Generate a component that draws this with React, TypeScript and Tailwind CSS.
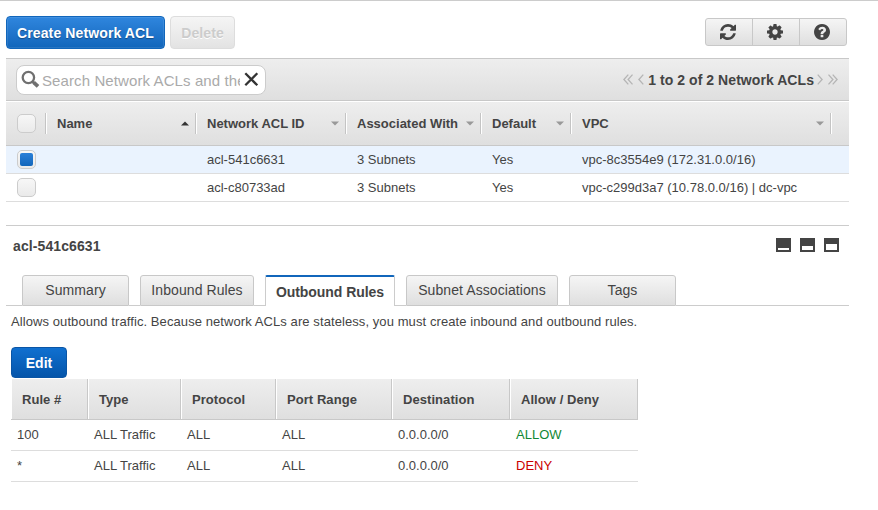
import React from "react";

const GREY = "bg-linear-to-b from-[#eeeeee] to-[#dfdfdf]";
const BTN = "bg-linear-to-b from-[#f5f5f5] to-[#dfdfdf]";

const REFRESH =
  "M1511 928q0 5-1 7-64 268-268 434.5t-478 166.5q-146 0-282.5-55t-243.5-157l-129 129q-19 19-45 19t-45-19-19-45v-448q0-26 19-45t45-19h448q26 0 45 19t19 45-19 45l-137 137q71 66 161 102t187 36q134 0 250-65t186-179q11-17 53-117 8-23 30-23h192q13 0 22.5 9.5t9.5 22.5zm25-800v448q0 26-19 45t-45 19h-448q-26 0-45-19t-19-45 19-45l138-138q-148-137-349-137-134 0-250 65t-186 179q-11 17-53 117-8 23-30 23h-199q-13 0-22.5-9.5t-9.5-22.5v-7q65-268 270-434.5t480-166.5q146 0 284 55.5t245 156.5l130-129q19-19 45-19t45 19 19 45z";
const COG =
  "M1024 768q0-106-75-181t-181-75-181 75-75 181 75 181 181 75 181-75 75-181zm512-109v222q0 12-8 23t-20 13l-185 28q-19 54-39 91 35 50 107 138 10 12 10 25t-9 23q-27 37-99 108t-94 71q-12 0-26-9l-138-108q-44 23-91 38-16 136-29 186-7 28-36 28h-222q-14 0-24.5-8.5t-11.5-21.5l-28-184q-49-16-90-37l-141 107q-10 9-25 9-14 0-25-11-126-114-165-168-7-10-7-23 0-12 8-23 15-21 51-66.5t54-70.5q-27-50-41-99l-183-27q-13-2-21-12.5t-8-23.5v-222q0-12 8-23t19-13l186-28q14-46 39-92-40-57-107-138-10-12-10-24 0-10 9-23 26-36 98.5-107.5t94.5-71.5q13 0 26 10l138 107q44-23 91-38 16-136 29-186 7-28 36-28h222q14 0 24.5 8.5t11.5 21.5l28 184q49 16 90 37l142-107q9-9 24-9 13 0 25 10 129 119 165 170 7 8 7 22 0 12-8 23-15 21-51 66.5t-54 70.5q26 50 41 98l183 28q13 2 21 12.5t8 23.5z";
const HELP =
  "M896 1248v-192q0-14-9-23t-23-9h-192q-14 0-23 9t-9 23v192q0 14 9 23t23 9h192q14 0 23-9t9-23zm256-672q0-88-55.5-163t-138.5-116-170-41q-243 0-371 213-15 24 8 42l132 100q7 6 19 6 16 0 25-12 53-68 86-92 34-24 86-24 48 0 85.5 26t37.5 59q0 38-20 61t-68 45q-63 28-115.5 86.5t-52.5 125.5v36q0 14 9 23t23 9h192q14 0 23-9t9-23q0-19 21.5-49.5t54.5-49.5q32-18 49-28.5t46-35 44.5-48 28-60.5 12.5-81zm384 192q0 209-103 385.5t-279.5 279.5-385.5 103-385.5-103-279.5-279.5-103-385.5 103-385.5 279.5-279.5 385.5-103 385.5 103 279.5 279.5 103 385.5z";

function Icon({ d }: { d: string }) {
  return (
    <svg width="16" height="16" viewBox="0 0 1536 1536" fill="#444">
      <path d={d} />
    </svg>
  );
}

function Checkbox({ checked = false }: { checked?: boolean }) {
  return (
    <span className="flex h-[19px] w-[19px] shrink-0 items-center justify-center rounded-[5px] border border-[#ccc] bg-linear-to-b from-[#f7f7f7] to-[#eaeaea]">
      {checked && <span className="h-[13px] w-[13px] rounded-[2px] bg-linear-to-b from-[#2b80d8] to-[#1166bb]" />}
    </span>
  );
}

function Chevron({ double = false, flip = false }: { double?: boolean; flip?: boolean }) {
  return (
    <svg width={double ? 10 : 6} height="11" viewBox={double ? "0 0 10 11" : "0 0 6 11"} fill="none" stroke="#b5b5b5" strokeWidth="1.3" className={`mb-px ${flip ? "-scale-x-100" : ""}`}>
      <path d="M5.3 .6 .9 5.5l4.4 4.9" />
      {double && <path d="M9.5 .6 5.1 5.5l4.4 4.9" />}
    </svg>
  );
}

const columns = [
  { label: "Name", width: "w-[150px]", sort: "up" },
  { label: "Network ACL ID", width: "w-[150px]", sort: "down" },
  { label: "Associated With", width: "w-[135px]", sort: "down" },
  { label: "Default", width: "w-[90px]", sort: "down" },
  { label: "VPC", width: "w-[260px]", sort: "down" },
];

const acls = [
  { id: "acl-541c6631", subnets: "3 Subnets", def: "Yes", vpc: "vpc-8c3554e9 (172.31.0.0/16)", checked: true },
  { id: "acl-c80733ad", subnets: "3 Subnets", def: "Yes", vpc: "vpc-c299d3a7 (10.78.0.0/16) | dc-vpc", checked: false },
];

const tabs = [
  { label: "Summary", width: "w-[107px]" },
  { label: "Inbound Rules", width: "w-[114px]" },
  { label: "Outbound Rules", width: "w-[130px]", active: true },
  { label: "Subnet Associations", width: "w-[152px]" },
  { label: "Tags", width: "w-[107px]" },
];

const ruleColumns = [
  { label: "Rule #", width: "w-[77px]" },
  { label: "Type", width: "w-[93px]" },
  { label: "Protocol", width: "w-[95px]" },
  { label: "Port Range", width: "w-[116px]" },
  { label: "Destination", width: "w-[118px]" },
  { label: "Allow / Deny", width: "w-[128px]" },
];

const rules = [
  ["100", "ALL Traffic", "ALL", "ALL", "0.0.0.0/0", "ALLOW"],
  ["*", "ALL Traffic", "ALL", "ALL", "0.0.0.0/0", "DENY"],
];

function Separator() {
  return <span className="h-[21px] w-[2px] shrink-0 border-l border-[#c4c4c4] bg-white" />;
}

function PaneIcon({ inner }: { inner: string }) {
  return (
    <span className="flex h-[14px] w-[15px] flex-col justify-end bg-[#444] px-[2px] pb-[2px]">
      <span className={`bg-white ${inner}`} />
    </span>
  );
}

export default function App() {
  return (
    <div className="h-[510px] w-[878px] overflow-hidden border-t border-[#ccc] bg-white font-['Liberation_Sans',Arial,sans-serif] text-[13px] leading-[16px] whitespace-nowrap text-[#444]">
      <div className="mt-[15px] ml-[6px] w-[843px]">
        <div className="flex h-[42px] items-start">
          <button className="h-[33px] w-[159px] rounded-[4px] border border-[#1166bb] bg-linear-to-b from-[#2f86de] to-[#1166bb] text-[14px] font-bold tracking-[0.12px] text-white shadow-[inset_0_0_0_1px_#ffffff18] [text-shadow:0_1px_1px_#0005]">
            Create Network ACL
          </button>
          <button className="ml-[5px] h-[33px] w-[65px] rounded-[4px] border border-[#ddd] bg-linear-to-b from-[#f5f5f5] to-[#e3e3e3] text-[14px] font-bold tracking-[0.1px] text-[#ccc] [text-shadow:0_1px_0_#fff]">
            Delete
          </button>
          <div className={`mt-[2px] mr-[2px] ml-auto flex h-[28px] w-[142px] rounded-[3px] border border-[#c8c8c8] ${BTN}`}>
            <span className="flex w-[47px] items-center justify-center border-r border-[#c8c8c8] pr-[2px]"><Icon d={REFRESH} /></span>
            <span className="flex w-[47px] items-center justify-center border-r border-[#c8c8c8] pr-[2px]"><Icon d={COG} /></span>
            <span className="flex flex-1 items-center justify-center pr-[2px]"><Icon d={HELP} /></span>
          </div>
        </div>

        <div className={`flex h-[43px] items-center border-y border-[#c8c8c8] ${GREY}`}>
          <div className="ml-[10px] flex h-[30px] w-[250px] items-center rounded-[8px] border border-[#ccc] bg-white">
            <svg width="19" height="19" viewBox="0 0 19 19" fill="none" stroke="#707070" className="ml-[4px] shrink-0">
              <circle cx="7.4" cy="7.5" r="5.7" strokeWidth="2.3" />
              <path d="M11.3 11.3l2 2" strokeWidth="2.4" />
              <path d="M12.6 12.4l4.4 4" strokeWidth="3.8" />
            </svg>
            <span className="mt-[2px] ml-[2px] w-[198px] overflow-hidden text-[15px] leading-[20px] tracking-[0.1px] text-[#aaa]">Search Network ACLs and the</span>
            <svg width="15" height="15" viewBox="0 0 15 15" stroke="#333" strokeWidth="2.3" className="ml-[4px] shrink-0">
              <path d="M1.3 1.3l12 12M13.3 1.3l-12 12" />
            </svg>
          </div>
          <div className="mr-[11px] ml-auto flex items-center text-[14px] font-bold tracking-[0.06px]">
            <Chevron double />
            <span className="w-[5px]" />
            <Chevron />
            <span className="mr-[3px] ml-[4px]">1 to 2 of 2 Network ACLs</span>
            <Chevron flip />
            <span className="w-[5px]" />
            <Chevron double flip />
          </div>
        </div>

        <div className={`mt-px flex h-[44px] items-center border-b border-[#c8c8c8] ${GREY}`}>
          <span className="flex w-[39px] pl-[11px]"><Checkbox /></span>
          <Separator />
          {columns.map((c) => (
            <div key={c.label} className={`flex items-center pl-[10px] font-bold ${c.width}`}>
              <span>{c.label}</span>
              <svg width="8" height="5" viewBox="0 0 8 5" className="mr-[6px] ml-auto shrink-0">
                {c.sort === "up" ? <path d="M0 4.5 4 .5l4 4z" fill="#333" /> : <path d="M0 .5h8l-4 4z" fill="#999" />}
              </svg>
              <Separator />
            </div>
          ))}
        </div>

        {acls.map((a) => (
          <div key={a.id} className={`flex h-[28px] items-center border-b border-[#ddd] ${a.checked ? "bg-[#eaf3fe]" : "bg-white"}`}>
            <span className="w-[201px] pl-[11px]"><Checkbox checked={a.checked} /></span>
            <span className="w-[150px]">{a.id}</span>
            <span className="w-[135px]">{a.subnets}</span>
            <span className="w-[90px]">{a.def}</span>
            <span>{a.vpc}</span>
          </div>
        ))}

        <div className="mt-[23px] flex h-[50px] border-t border-[#ccc] pt-[12px] pr-[10px] pl-[7px]">
          <span className="text-[14px] font-bold tracking-[0.1px]">acl-541c6631</span>
          <div className="ml-auto flex gap-[9px]">
            <PaneIcon inner="h-[2px]" />
            <PaneIcon inner="h-[4px]" />
            <PaneIcon inner="h-[6px]" />
          </div>
        </div>

        <div className="flex h-[31px] items-stretch">
          <span className="w-[16px] border-b border-[#ccc]" />
          {tabs.map((t) => (
            <React.Fragment key={t.label}>
              <span
                className={`flex shrink-0 items-center justify-center text-[14px] ${t.width} ${
                  t.active
                    ? "rounded-t-[2px] border-x border-t-2 border-x-[#ccc] border-t-[#1166bb] bg-white font-bold tracking-[-0.05px]"
                    : `rounded-t-[3px] border border-[#c8c8c8] pb-[2px] tracking-[0.08px] ${BTN}`
                }`}
              >
                {t.label}
              </span>
              <span className={`border-b border-[#ccc] ${t.label === "Tags" ? "flex-1" : "w-[11px]"}`} />
            </React.Fragment>
          ))}
        </div>

        <p className="mt-[8px] ml-[5px] tracking-[0.083px]">Allows outbound traffic. Because network ACLs are stateless, you must create inbound and outbound rules.</p>
        <button className="mt-[17px] ml-[5px] block h-[31px] w-[56px] rounded-[4px] border border-[#0a55a5] bg-linear-to-b from-[#1070d0] to-[#0555aa] text-[14px] font-bold text-white">Edit</button>

        <div className="mt-px ml-[5px] w-[627px]">
          <div className="flex h-[41px] border-b border-[#c8c8c8]">
            {ruleColumns.map((c) => (
              <span key={c.label} className={`flex shrink-0 items-center border-r border-l border-r-[#c8c8c8] border-l-white pt-[2px] pl-[10px] font-bold tracking-[0.06px] ${GREY} ${c.width}`}>{c.label}</span>
            ))}
          </div>
          {rules.map((r) => (
            <div key={r[0]} className="flex h-[31px] items-center border-b border-[#ddd] pl-[6px]">
              {r.map((v, i) => (
                <span key={i} className={`shrink-0 ${ruleColumns[i].width} ${v === "ALLOW" ? "text-[#118833]" : v === "DENY" ? "text-[#cc0000]" : ""}`}>{v}</span>
              ))}
            </div>
          ))}
        </div>
      </div>
    </div>
  );
}
